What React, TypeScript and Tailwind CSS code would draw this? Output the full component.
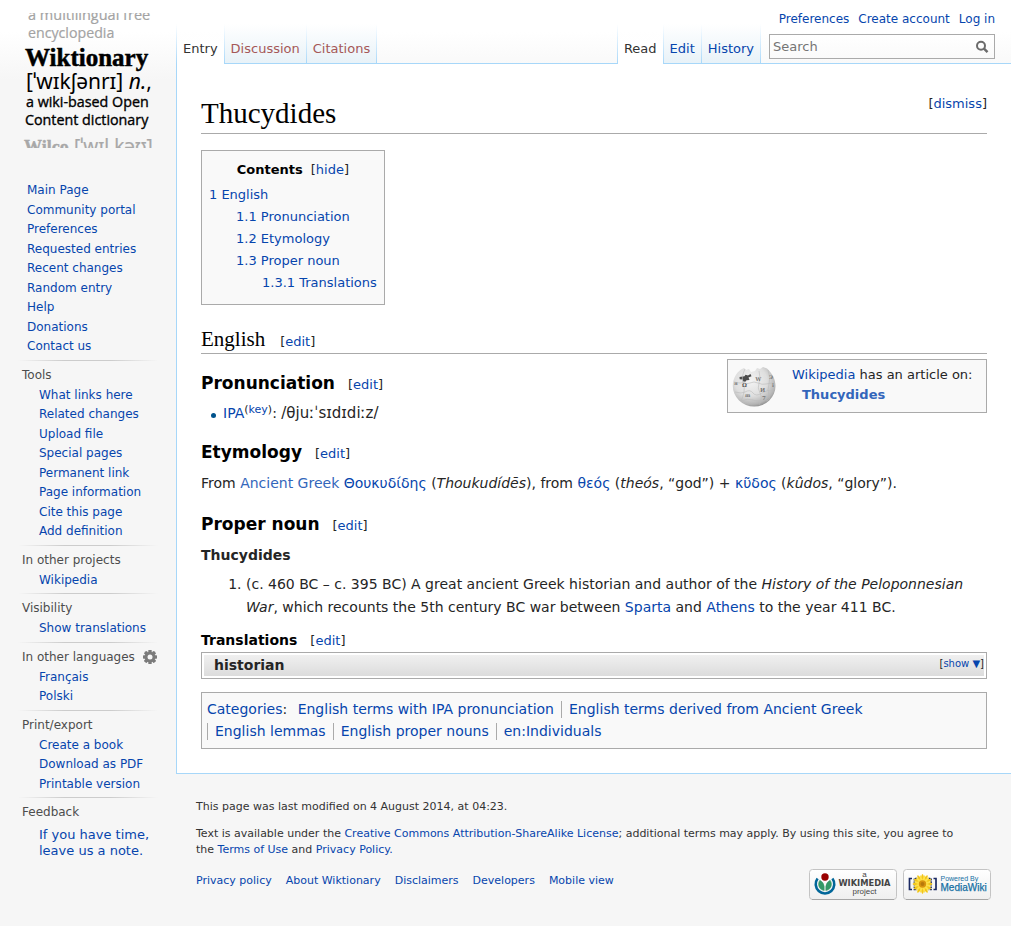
import React from "react";

type Section = { title?: string; items: string[]; settings?: boolean };

const sections: Section[] = [
  {
    title: "Tools",
    items: [
      "What links here",
      "Related changes",
      "Upload file",
      "Special pages",
      "Permanent link",
      "Page information",
      "Cite this page",
      "Add definition",
    ],
  },
  { title: "In other projects", items: ["Wikipedia"] },
  { title: "Visibility", items: ["Show translations"] },
  { title: "In other languages", items: ["Français", "Polski"], settings: true },
  { title: "Print/export", items: ["Create a book", "Download as PDF", "Printable version"] },
];

const mainLinks = [
  "Main Page",
  "Community portal",
  "Preferences",
  "Requested entries",
  "Recent changes",
  "Random entry",
  "Help",
  "Donations",
  "Contact us",
];

const categories = [
  "English terms with IPA pronunciation",
  "English terms derived from Ancient Greek",
  "English lemmas",
  "English proper nouns",
  "en:Individuals",
];

function Link({ children, className = "text-[#0645ad]" }: { children: React.ReactNode; className?: string }) {
  return (
    <a href="#" className={`hover:underline ${className}`}>
      {children}
    </a>
  );
}

function Logo() {
  const sans = "'Open Sans', 'Noto Sans', sans-serif";
  const ipa = "'Noto Sans', sans-serif";
  const serif = "'Liberation Serif', serif";
  return (
    <svg width="135" height="135" viewBox="0 0 135 135" className="block overflow-hidden" role="img" aria-label="Wiktionary">
      <g fill="#a3a3a3" stroke="#a3a3a3" strokeWidth=".2" fontFamily={sans}>
        <text x="7" y="7" fontSize="14.500">a multilingual free</text>
        <text x="7" y="25" fontSize="14.200">encyclopedia</text>
      </g>
      <text x="4" y="53" fontFamily={serif} fontSize="25" fontWeight="700" stroke="#000" strokeWidth=".5">Wiktionary</text>
      <text x="5" y="76" fontFamily={ipa} fontSize="21">
        [ˈwɪkʃənrɪ] <tspan fontStyle="italic">n.</tspan>,
      </text>
      <g fontFamily={sans} fontSize="14.300" stroke="#000" strokeWidth=".35">
        <text x="5" y="94">a wiki-based Open</text>
        <text x="4" y="112">Content dictionary</text>
      </g>
      <g fill="#a8a8a8" stroke="#a8a8a8" strokeWidth=".2">
        <text x="3" y="140" fontFamily={serif} fontSize="18" fontWeight="700" strokeWidth=".4">Wilco</text>
        <text x="53" y="140" fontFamily={ipa} fontSize="19">[ˈwɪl kəʊ]</text>
      </g>
    </svg>
  );
}

function Gear() {
  return (
    <svg width="14" height="14" viewBox="0 0 14 14" className="block" aria-hidden="true">
      <g fill="#7b7b7b">
        {[0, 45, 90, 135].map((a) => (
          <rect key={a} x="5.3" y="0" width="3.4" height="14" rx=".6" transform={`rotate(${a} 7 7)`} />
        ))}
        <circle cx="7" cy="7" r="5.3" />
      </g>
      <circle cx="7" cy="7" r="2.5" fill="#f6f6f6" />
    </svg>
  );
}

function Globe() {
  return (
    <svg width="44" height="42" viewBox="0 0 44 42" className="block" aria-hidden="true">
      <defs>
        <radialGradient id="ball" cx=".42" cy=".35" r=".7">
          <stop offset="0" stopColor="#f4f4f4" />
          <stop offset=".55" stopColor="#dedede" />
          <stop offset=".85" stopColor="#b4b4b4" />
          <stop offset="1" stopColor="#808080" />
        </radialGradient>
      </defs>
      <path
        d="M9 4.500L12 3l2 2 3-1 2 3 4-1 2-3 3 1 3-2 4 1.500C40 8 43.500 14 43.500 21A21.300 20.500 0 0 1 .8 21C.8 14 4 8 9 4.500z"
        fill="url(#ball)"
      />
      <path d="M7.500 12l5-.8 1-1.400 2.500.6 2.500-1.400 1 2.200-3 1.300 1 2.400-3 .4-1.200 1.500-2.600-.6.200-1.700-3.200-.2z" fill="#4a4a4a" />
      <g fill="none" stroke="#bbb" strokeWidth=".6">
        <path d="M2 17q8 2 9 0 3 3 7 1t8 0 8 1 9-1M3 27q7 2 10 0 5-3 8 1t9 0 11-2M9 36q7-3 12-1t13-1" />
        <path d="M13 4q-4 8-2 13t1 10-3 9M27 6q2 7 0 12t1 10-1 12M36 5q3 8 1 14t0 11-3 6" />
      </g>
      <g fill="#777" fontFamily="'DejaVu Serif', serif" fontSize="5.500" fontWeight="700">
        <text x="10" y="22" fill="#555">Ω</text>
        <text x="23.500" y="16" fontSize="5">W</text>
        <text x="28" y="26.500">И</text>
        <text x="13" y="31.500" fontSize="5">m</text>
        <text x="37" y="13.500" fontSize="5">Э</text>
        <text x="2" y="20" fontSize="5">я</text>
        <text x="30" y="35">7</text>
        <text x="40" y="22" fontSize="5">i</text>
      </g>
    </svg>
  );
}

function BadgeFrame({ id }: { id: string }) {
  return (
    <>
      <defs>
        <linearGradient id={id} x1="0" y1="0" x2="0" y2="1">
          <stop offset="0" stopColor="#fff" />
          <stop offset="1" stopColor="#efefef" />
        </linearGradient>
      </defs>
      <rect x=".5" y=".5" width="87" height="30" rx="3" fill={`url(#${id})`} stroke="#c4c4c4" />
      <path d="M3 30.500h82" stroke="#a6a6a6" />
    </>
  );
}

function WikimediaBadge() {
  return (
    <svg width="88" height="31" viewBox="0 0 88 31" className="block" role="img" aria-label="Wikimedia project">
      <BadgeFrame id="wm" />
      <path d="M8.600 9.500A9.300 9.300 0 1 0 23.400 9.500" fill="none" stroke="#069" strokeWidth="2.600" />
      <path d="M10.900 11.200A6.500 6.500 0 0 0 15.200 21.600V17.500Q15 13.500 10.900 11.200zM21.100 11.200A6.500 6.500 0 0 1 16.800 21.600V17.500Q17 13.500 21.100 11.200z" fill="#396" stroke="#396" strokeWidth=".5" />
      <circle cx="16" cy="8" r="3.700" fill="#900" />
      <g textAnchor="middle" fill="#444" fontFamily="'Liberation Sans', sans-serif">
        <text x="55.500" y="8" fontSize="8">a</text>
        <text x="55.500" y="17" fontSize="8.300" fontWeight="700" fontFamily="'DejaVu Sans', sans-serif">WIKIMEDIA</text>
        <text x="55.500" y="25" fontSize="8">project</text>
      </g>
    </svg>
  );
}

function MediaWikiBadge() {
  return (
    <svg width="88" height="31" viewBox="0 0 88 31" className="block" role="img" aria-label="Powered by MediaWiki">
      <BadgeFrame id="mw" />
      <g fill="none" stroke="#1b2a63" strokeWidth="1.700">
        <path d="M9 9.500H6.500V20.500H9M30.500 9.500H33V20.500H30.500" />
        <path d="M14 9.500H11.500V20.500H14M25.500 9.500H28V20.500H25.500" strokeDasharray="1.800 .8" />
      </g>
      <g fill="#f2c619">
        {[0, 30, 60, 90, 120, 150].map((a) => (
          <ellipse key={a} cx="19.500" cy="15" rx="2" ry="10" transform={`rotate(${a} 19.500 15)`} />
        ))}
      </g>
      <g fill="#ffe14a">
        {[15, 45, 75, 105, 135, 165].map((a) => (
          <ellipse key={a} cx="19.500" cy="15" rx="1.300" ry="9" transform={`rotate(${a} 19.500 15)`} />
        ))}
      </g>
      <circle cx="19.500" cy="15" r="3.700" fill="#d9940f" />
      <circle cx="19.500" cy="15" r="2" fill="#b8790c" />
      <g fill="#1470a4" fontFamily="'Liberation Sans', sans-serif">
        <text x="37.500" y="12" fontSize="7">Powered By</text>
        <text x="37.500" y="22" fontSize="10" stroke="#1470a4" strokeWidth=".25">MediaWiki</text>
      </g>
    </svg>
  );
}

/* Vertical rule that fades in towards the bottom of the tab strip. */
function TabRule() {
  return <span aria-hidden="true" className="w-px bg-linear-to-b from-white to-[#a7d7f9]" />;
}

function Tab({ label, active, missing }: { label: string; active?: boolean; missing?: boolean }) {
  const look = active
    ? "bg-linear-to-b from-white/0 to-white to-50% text-[#333]"
    : missing
      ? "border-b border-[#a7d7f9] bg-linear-to-b from-white to-[#e8f2f8] text-[#a55858]"
      : "border-b border-[#a7d7f9] bg-linear-to-b from-white to-[#e8f2f8] text-[#0645ad]";
  return (
    <a href="#" aria-current={active ? "page" : undefined} className={`px-1.5 pt-[17px] text-[13px] leading-4 ${look}`}>
      {label}
    </a>
  );
}

function Edit() {
  return (
    <span
      className="text-[13px] leading-none font-normal text-[#252525]"
      style={{ fontFamily: "'DejaVu Sans', sans-serif" }}
    >
      [<Link>edit</Link>]
    </span>
  );
}

function H3({ children, className }: { children: React.ReactNode; className: string }) {
  return (
    <h3 className={`flex items-baseline gap-[13px] text-[17px] leading-6 font-bold text-black ${className}`}>
      {children}
      <Edit />
    </h3>
  );
}

function SideRule() {
  return (
    <div className="ml-[18px] h-px w-[140px] bg-[linear-gradient(to_right,transparent,#cccccc_33%,#cccccc_66%,transparent)]" />
  );
}

function Sidebar() {
  return (
    <aside className="w-44 shrink-0">
      <a href="#" className="block pt-[13px] pl-[21px]">
        <Logo />
      </a>
      <nav aria-label="Site" className="pt-[33px] text-xs">
        <ul className="pb-[3px] pl-[27px] leading-relaxed">
          {mainLinks.map((l) => (
            <li key={l}>
              <Link>{l}</Link>
            </li>
          ))}
        </ul>
        {sections.map((s) => (
          <section key={s.title} className="pb-[3px]">
            <SideRule />
            <div className="flex items-center gap-2 pt-1 pb-px pl-[22px]">
              <h2 className="leading-5 text-[#4d4d4d]">{s.title}</h2>
              {s.settings && (
                <button type="button" aria-label="Language settings">
                  <Gear />
                </button>
              )}
            </div>
            <ul className="pl-[39px] leading-relaxed">
              {s.items.map((l) => (
                <li key={l}>
                  <Link>{l}</Link>
                </li>
              ))}
            </ul>
          </section>
        ))}
        <section>
          <SideRule />
          <h2 className="pt-1 pl-[22px] leading-5 text-[#4d4d4d]">Feedback</h2>
          <p className="mt-[5px] pr-4 pl-[39px] text-[13px] leading-4">
            <Link>If you have time, leave us a note.</Link>
          </p>
        </section>
      </nav>
    </aside>
  );
}

function Header() {
  return (
    <header className="flex h-16 justify-between">
      <nav aria-label="Namespaces" className="mt-6 flex">
        <TabRule />
        <Tab label="Entry" active />
        <TabRule />
        <Tab label="Discussion" missing />
        <TabRule />
        <Tab label="Citations" missing />
        <TabRule />
      </nav>
      <div className="flex-1 border-b border-[#a7d7f9]" />
      <nav aria-label="Views" className="mt-6 flex">
        <TabRule />
        <Tab label="Read" active />
        <TabRule />
        <Tab label="Edit" />
        <TabRule />
        <Tab label="History" />
        <TabRule />
      </nav>
      <div className="border-b border-[#a7d7f9] pt-[11px] pr-4 pl-2">
        <ul className="flex justify-end gap-[9px] text-xs leading-4">
          <li><Link>Preferences</Link></li>
          <li><Link>Create account</Link></li>
          <li><Link>Log in</Link></li>
        </ul>
        <form className="mt-[7px] flex h-[25px] w-[226px] items-center border border-[#aaa] bg-linear-to-b from-white to-[#fafafa] pr-[5px]">
          <label htmlFor="search" className="sr-only">Search</label>
          <input
            id="search"
            type="search"
            placeholder="Search"
            className="min-w-0 flex-1 bg-transparent pl-[3px] text-[13px] leading-5 text-black outline-none placeholder:text-[#757575]"
          />
          <button type="submit" aria-label="Go">
            <svg width="14" height="14" viewBox="0 0 14 14" className="block" fill="none" stroke="#6b6b6b" aria-hidden="true">
              <circle cx="6" cy="5.700" r="4" strokeWidth="2" />
              <path d="M9 8.700L12.500 12.200" strokeWidth="2.500" />
            </svg>
          </button>
        </form>
      </div>
    </header>
  );
}

function Contents() {
  return (
    <nav aria-label="Contents" className="mt-4 w-fit border border-[#aaa] bg-[#f9f9f9] px-[7px] pt-2 pb-2.5 text-[13px] leading-[22px]">
      <div className="flex justify-center gap-2">
        <h2 className="font-bold text-black">Contents</h2>
        <span>
          [<button type="button" className="text-[#0645ad]">hide</button>]
        </span>
      </div>
      <ul className="mt-[3px]">
        <li>
          <Link>1 English</Link>
          <ul className="pl-[27px]">
            <li><Link>1.1 Pronunciation</Link></li>
            <li><Link>1.2 Etymology</Link></li>
            <li>
              <Link>1.3 Proper noun</Link>
              <ul className="pl-[26px]">
                <li><Link>1.3.1 Translations</Link></li>
              </ul>
            </li>
          </ul>
        </li>
      </ul>
    </nav>
  );
}

function Article() {
  return (
    <main className="border-b border-l border-[#a7d7f9] bg-white px-6 pt-[31px] pb-6 text-sm leading-[22px]">
      <div className="flex items-start justify-between border-b border-[#aaa] pb-0.5">
        <h1 className="text-[29px] leading-9 text-black" style={{ fontFamily: "'Liberation Serif', serif" }}>
          Thucydides
        </h1>
        <span className="pt-px text-[13px] leading-4">
          [<button type="button" className="text-[#0645ad]">dismiss</button>]
        </span>
      </div>

      <Contents />

      <h2
        className="mt-5 flex items-baseline gap-[15px] border-b border-[#aaa] text-[21px] leading-7 text-black"
        style={{ fontFamily: "'Liberation Serif', serif" }}
      >
        English
        <Edit />
      </h2>

      <aside className="float-right mt-[5px] flex h-[54px] w-[260px] items-center gap-4 border border-[#aaa] bg-[#f9f9f9] pl-1 text-[13px] leading-5">
        <Globe />
        <div className="pb-0.5">
          <p><Link>Wikipedia</Link> has an article on:</p>
          <p className="pl-2.5 font-bold"><Link className="text-[#36b]">Thucydides</Link></p>
        </div>
      </aside>

      <H3 className="pt-[17px]">Pronunciation</H3>
      <ul className="mt-[7px] pl-2.5">
        <li className="flex items-center gap-[7px]">
          <span aria-hidden="true" className="mt-1 size-[5px] rounded-full bg-[#00528c]" />
          <span>
            <Link>IPA</Link>
            <sup className="text-[11px] leading-none">
              (<Link>key</Link>)
            </sup>
            : <span className="text-[15px] leading-none">/θjuːˈsɪdɪdiːz/</span>
          </span>
        </li>
      </ul>

      <H3 className="mt-4">Etymology</H3>
      <p className="mt-2">
        From <Link className="text-[#36b]">Ancient Greek</Link> <Link>Θουκυδίδης</Link> (<i>Thoukudídēs</i>), from{" "}
        <Link>θεός</Link> (<i>theós</i>, “god”) + <Link>κῦδος</Link> (<i>kûdos</i>, “glory”).
      </p>

      <H3 className="mt-[18px]">Proper noun</H3>
      <p className="mt-2 font-bold">Thucydides</p>
      <ol className="mt-[7px] list-decimal pl-[45px] leading-[23px]">
        <li>
          (c. 460 BC – c. 395 BC) A great ancient Greek historian and author of the{" "}
          <i>History of the Peloponnesian War</i>, which recounts the 5th century BC war between <Link>Sparta</Link> and{" "}
          <Link>Athens</Link> to the year 411 BC.
        </li>
      </ol>

      <h4 className="mt-2.5 flex items-baseline gap-[13px] font-bold text-black">
        Translations
        <Edit />
      </h4>
      <div className="mt-px border border-[#aaa] p-0.5">
        <div className="flex items-start justify-between bg-linear-to-b from-[#f0f0f0] to-[#dcdcdc] pl-2.5 leading-[21px]">
          <span className="font-bold">historian</span>
          <span className="text-[10px] leading-[18px]">
            [<button type="button" className="text-[#0645ad]">show ▼</button>]
          </span>
        </div>
      </div>

      <div className="mt-[13px] border border-[#aaa] bg-[#f9f9f9] px-[5px] pt-[5px] pb-1.5">
        <Link>Categories</Link>:{" "}
        <ul className="inline">
          {categories.map((c, i) => (
            <li
              key={c}
              className={
                i === 0
                  ? "inline-block pr-[7px] pl-1.5 leading-[17px]"
                  : "inline-block border-l border-[#aaa] px-[7px] leading-[17px]"
              }
            >
              <Link>{c}</Link>
            </li>
          ))}
        </ul>
      </div>
    </main>
  );
}

function Footer() {
  return (
    <footer className="px-5 pt-[25px] pb-6 text-[11px] leading-4 text-[#333]">
      <p>This page was last modified on 4 August 2014, at 04:23.</p>
      <p className="mt-[11px] pr-6">
        Text is available under the <Link>Creative Commons Attribution-ShareAlike License</Link>; additional terms may
        apply. By using this site, you agree to the <Link>Terms of Use</Link> and <Link>Privacy Policy.</Link>
      </p>
      <div className="mt-[11px] flex items-start justify-between">
        <ul className="flex gap-3.5 pt-1">
          {["Privacy policy", "About Wiktionary", "Disclaimers", "Developers", "Mobile view"].map((l) => (
            <li key={l}>
              <Link>{l}</Link>
            </li>
          ))}
        </ul>
        <div className="flex gap-1.5">
          <a href="#"><WikimediaBadge /></a>
          <a href="#"><MediaWikiBadge /></a>
        </div>
      </div>
    </footer>
  );
}

export default function App() {
  return (
    <div
      className="min-h-screen bg-[#f6f6f6] text-[#252525]"
      style={{ fontFamily: "'DejaVu Sans', 'Noto Sans CJK JP', sans-serif" }}
    >
      <div className="flex bg-[linear-gradient(to_bottom,#ffffff_0,#ffffff_32px,#f6f6f6_80px)]">
        <Sidebar />
        <div className="min-w-0 flex-1">
          <Header />
          <Article />
          <Footer />
        </div>
      </div>
    </div>
  );
}
